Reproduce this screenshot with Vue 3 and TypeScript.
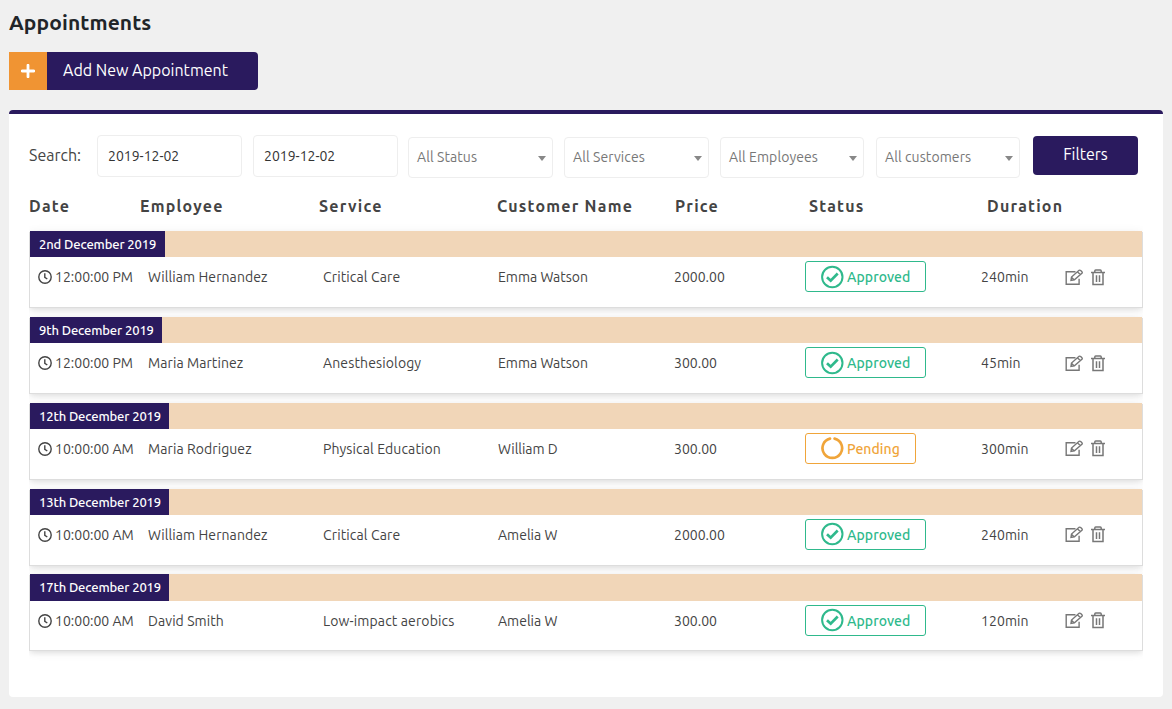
<script setup lang="ts">
interface Appointment {
  date: string
  time: string
  employee: string
  service: string
  customer: string
  price: string
  status: 'Approved' | 'Pending'
  duration: string
}

const dates: string[] = ['2019-12-02', '2019-12-02']
const selects: string[] = ['All Status', 'All Services', 'All Employees', 'All customers']
const headings: string[] = ['Date', 'Employee', 'Service', 'Customer Name', 'Price', 'Status', 'Duration']

const appointments: Appointment[] = [
  { date: '2nd December 2019', time: '12:00:00 PM', employee: 'William Hernandez', service: 'Critical Care', customer: 'Emma Watson', price: '2000.00', status: 'Approved', duration: '240min' },
  { date: '9th December 2019', time: '12:00:00 PM', employee: 'Maria Martinez', service: 'Anesthesiology', customer: 'Emma Watson', price: '300.00', status: 'Approved', duration: '45min' },
  { date: '12th December 2019', time: '10:00:00 AM', employee: 'Maria Rodriguez', service: 'Physical Education', customer: 'William D', price: '300.00', status: 'Pending', duration: '300min' },
  { date: '13th December 2019', time: '10:00:00 AM', employee: 'William Hernandez', service: 'Critical Care', customer: 'Amelia W', price: '2000.00', status: 'Approved', duration: '240min' },
  { date: '17th December 2019', time: '10:00:00 AM', employee: 'David Smith', service: 'Low-impact aerobics', customer: 'Amelia W', price: '300.00', status: 'Approved', duration: '120min' },
]
</script>

<template>
  <main class="page">
    <h1 class="title"><span>Appointments</span></h1>
    <button class="add">
      <span class="add-icon">
        <svg width="14" height="14" viewBox="0 0 14 14"><path d="M7 1.2v11.6M1.2 7h11.6" stroke="#fff" stroke-width="2.8" stroke-linecap="round" /></svg>
      </span>
      <span class="add-label">Add New Appointment</span>
    </button>

    <section class="panel">
      <div class="filters">
        <span class="search">Search:</span>
        <div v-for="(d, i) in dates" :key="i" class="field date">{{ d }}</div>
        <div v-for="s in selects" :key="s" class="field select">
          <span>{{ s }}</span>
          <i class="caret"></i>
        </div>
        <button class="apply">Filters</button>
      </div>

      <div class="headings">
        <span v-for="h in headings" :key="h">{{ h }}</span>
      </div>

      <div class="list">
        <article v-for="a in appointments" :key="a.date" class="card">
          <header class="strip"><span class="tag" :class="{ nine: a.date.startsWith('9'), two: a.date.startsWith('2') }">{{ a.date }}</span></header>
          <div class="row">
            <span class="time">
              <svg width="14" height="14" viewBox="0 0 14 14" fill="none" stroke="#444" stroke-width="1.4"><circle cx="7" cy="7" r="6.2" /><path d="M6.8 3.3v4l2.5 1.7" /></svg>
              <span>{{ a.time }}</span>
            </span>
            <span class="wide">{{ a.employee }}</span>
            <span class="wide service">{{ a.service }}</span>
            <span>{{ a.customer }}</span>
            <span>{{ a.price }}</span>
            <div class="status">
              <span class="badge" :class="a.status.toLowerCase()">
                <svg v-if="a.status === 'Approved'" width="24" height="24" viewBox="0 0 24 24" fill="none" stroke="currentColor">
                  <circle cx="12.3" cy="12" r="10.2" stroke-width="2" />
                  <path d="M7 12.2l3.7 3.5 7-7.2" stroke-width="2.7" />
                </svg>
                <svg v-else width="24" height="24" viewBox="0 0 24 24" fill="none" stroke="currentColor">
                  <path d="M10 2.6A9.8 9.8 0 1 0 14.6 2.6" stroke-width="2.7" stroke-linecap="round" />
                </svg>
                <span class="badge-text">{{ a.status }}</span>
              </span>
            </div>
            <span class="wide">{{ a.duration }}</span>
            <span class="actions">
              <svg width="19" height="17" viewBox="0 0 19 17" fill="none" stroke="#777" stroke-width="1.4">
                <path d="M10.5 2.7H1.2v12.6h12.9V9.8" />
                <path d="M6 11.4l.5-3.3 7.6-6.8q.8-.5 1.6.2l1.2 1.2q.7.8 0 1.6l-7.5 6.6zM12.6 2.9l3 2.9M6.7 8.5l2.6 2.4" />
              </svg>
              <svg width="14" height="17" viewBox="0 0 14 17" fill="none" stroke="#777" stroke-width="1.5">
                <path d="M0 3.6h14M2 3.6v12h10v-12M5.5 6.2v6.8M8.5 6.2v6.8" />
                <path d="M3.8 3.2V2q0-.9.9-.9h4.6q.9 0 .9.9v1.2" />
              </svg>
            </span>
          </div>
        </article>
      </div>
    </section>
  </main>
</template>

<style>
body {
  background: #f0f0f0;
}
</style>

<style scoped>
.page {
  box-sizing: border-box;
  height: 709px;
  padding: 9px 9px 12px;
  display: flex;
  flex-direction: column;
  align-items: stretch;
  overflow: hidden;
  background: #f0f0f0;
  color: #444;
  font-family: Ubuntu, "Noto Sans", sans-serif;
  font-size: 14px;
  white-space: nowrap;
}

.title {
  margin: 0;
  height: 43px;
  line-height: 26px;
  font-size: 21px;
  font-weight: 600;
  letter-spacing: 0.1px;
  color: #212529;
}

button {
  border: 0;
  padding: 0;
  font-family: inherit;
}

.add {
  display: flex;
  flex: none;
  width: 249px;
  height: 38px;
  overflow: hidden;
  border-radius: 0 4px 4px 0;
  background: #2a1a5e;
  color: #fff;
  font-size: 16px;
}

.add-icon {
  display: flex;
  align-items: center;
  justify-content: center;
  width: 38px;
  height: 38px;
  background: #f09433;
}

.add-label {
  margin-left: 16px;
  line-height: 36px;
}

.panel {
  box-sizing: border-box;
  flex: 1;
  margin-top: 20px;
  padding: 21px 20px 0;
  border-top: 4px solid #2a1a5e;
  border-radius: 4px;
  background: #fff;
}

.filters {
  display: grid;
  grid-template-columns: 57px 145px 145px 145px 145px 144px 144px 105px;
  column-gap: 11px;
  height: 43px;
}

.filters > :nth-child(n + 4) {
  margin-left: -1px;
  margin-right: 1px;
}

.filters > :nth-child(n + 7) {
  margin-left: 0;
  margin-right: 0;
}

.filters > :nth-child(8) {
  margin-left: 2px;
  margin-right: -2px;
}

.search {
  font-size: 16px;
  line-height: 40px;
}

.field {
  box-sizing: border-box;
  border: 1px solid #eee;
  border-radius: 4px;
}

.date {
  height: 42px;
  padding-left: 10px;
  line-height: 40px;
  color: #333;
}

.select {
  display: flex;
  align-items: center;
  justify-content: space-between;
  height: 41px;
  margin-top: 2px;
  padding: 0 6px 1px 8px;
  color: #777;
  letter-spacing: 0.09px;
}

.caret {
  margin-top: 3px;
  border: 4px solid transparent;
  border-top: 5px solid #888;
  border-bottom: 0;
}

.apply {
  height: 39px;
  margin-top: 1px;
  padding-bottom: 2px;
  border-radius: 4px;
  background: #2a1a5e;
  color: #fff;
  font-size: 16px;
  line-height: 37px;
}

.headings {
  display: grid;
  grid-template-columns: 111px 179px 178px 178px 134px 178px 1fr;
  height: 53.2px;
  line-height: 56px;
  font-size: 16px;
  font-weight: 600;
  letter-spacing: 1.22px;
}

.list {
  margin-top: -10px;
  padding: 10px 1px 20px;
  overflow: hidden;
}

.card {
  height: 76px;
  margin-bottom: 9.8px;
  background: #fff;
  box-shadow: 1px 1px 0 #ddd, -1px 1px 0 #ddd, 0 3px 5px rgba(0, 0, 0, 0.08), 0 2px 10px rgba(0, 0, 0, 0.08);
}

.strip {
  display: flex;
  height: 26.2px;
  background: #f1d6b8;
}

.tag {
  box-sizing: border-box;
  width: 139px;
  padding-left: 9px;
  background: #2a1a5e;
  color: #fff;
  font-size: 13px;
  font-weight: 500;
  letter-spacing: -0.12px;
  line-height: 26px;
}

.tag.two {
  width: 135px;
}

.tag.nine {
  width: 132px;
}

.row {
  display: grid;
  grid-template-columns: 110px 175px 175px 176px 131px 176px 83.5px 1fr;
  height: 40px;
  padding-left: 8px;
  line-height: 40px;
}

.wide {
  letter-spacing: 0.08px;
}

.service {
  letter-spacing: 0.13px;
}

.time {
  display: flex;
  align-items: center;
  gap: 3px;
}

.status {
  padding-top: 4px;
}

.badge {
  box-sizing: border-box;
  display: flex;
  align-items: center;
  width: 121px;
  height: 31px;
  padding-left: 14px;
  gap: 3px;
  border: 1px solid currentColor;
  border-radius: 3px;
  font-weight: 500;
}

.badge-text {
  padding-top: 1px;
  letter-spacing: 0.07px;
}

.approved {
  color: #2fb98c;
}

.pending {
  width: 111px;
  color: #f0a53a;
}

.actions {
  display: flex;
  align-items: center;
  gap: 7px;
}
</style>
